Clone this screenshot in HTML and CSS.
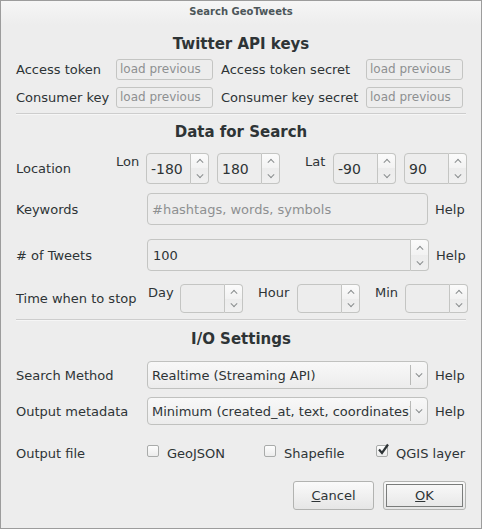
FILE: index.html
```html
<!DOCTYPE html>
<html>
<head>
<meta charset="utf-8">
<link rel="stylesheet" href="styles.css">
</head>
<body>
<div class="window">
  <div class="titlebar">Search GeoTweets</div>
  <div class="content">
    <h2 class="heading h-first">Twitter API keys</h2>
    <div class="keys">
      <span class="klabel">Access token</span>
      <span class="kfield">load previous</span>
      <span class="klabel2">Access token secret</span>
      <span class="kfield">load previous</span>
      <span class="klabel">Consumer key</span>
      <span class="kfield">load previous</span>
      <span class="klabel2">Consumer key secret</span>
      <span class="kfield">load previous</span>
    </div>
    <div class="sep"></div>
    <h2 class="heading h-second">Data for Search</h2>

    <div class="row row-loc">
      <span class="rlabel w100">Location</span>
      <span class="sublabel w30">Lon</span>
      <div class="spin sp-small"><span class="sfield">-180</span><span class="sbtns"><i class="up"></i><i class="dn"></i></span></div>
      <div class="spin sp-small ml8"><span class="sfield">180</span><span class="sbtns"><i class="up"></i><i class="dn"></i></span></div>
      <span class="sublabel lat">Lat</span>
      <div class="spin sp-small"><span class="sfield">-90</span><span class="sbtns"><i class="up"></i><i class="dn"></i></span></div>
      <div class="spin sp-small ml8"><span class="sfield">90</span><span class="sbtns"><i class="up"></i><i class="dn"></i></span></div>
    </div>

    <div class="row row-kw">
      <span class="rlabel w131">Keywords</span>
      <span class="lineedit placeholder">#hashtags, words, symbols</span>
      <span class="help">Help</span>
    </div>

    <div class="row row-tw">
      <span class="rlabel w131">#&nbsp;of Tweets</span>
      <div class="spin sp-wide"><span class="sfield">100</span><span class="sbtns"><i class="up"></i><i class="dn"></i></span></div>
      <span class="help">Help</span>
    </div>

    <div class="row row-time">
      <span class="rlabel w132">Time when to stop</span>
      <span class="sublabel w32">Day</span>
      <div class="spin sp-time"><span class="sfield"></span><span class="sbtns"><i class="up"></i><i class="dn"></i></span></div>
      <span class="sublabel hour">Hour</span>
      <div class="spin sp-time"><span class="sfield"></span><span class="sbtns"><i class="up"></i><i class="dn"></i></span></div>
      <span class="sublabel min">Min</span>
      <div class="spin sp-time"><span class="sfield"></span><span class="sbtns"><i class="up"></i><i class="dn"></i></span></div>
    </div>

    <div class="sep sep2"></div>
    <h2 class="heading h-third">I/O Settings</h2>

    <div class="row row-sm">
      <span class="rlabel w131">Search Method</span>
      <div class="combo"><span class="ctext">Realtime (Streaming API)</span><span class="cbtn"><i class="dn"></i></span></div>
      <span class="help">Help</span>
    </div>
    <div class="row row-om">
      <span class="rlabel w131">Output metadata</span>
      <div class="combo"><span class="ctext">Minimum (created_at, text, coordinates)</span><span class="cbtn"><i class="dn"></i></span></div>
      <span class="help">Help</span>
    </div>

    <div class="row row-of">
      <span class="rlabel w131">Output file</span>
      <label class="check w117"><span class="box"></span>GeoJSON</label>
      <label class="check w112"><span class="box"></span>Shapefile</label>
      <label class="check"><span class="box checked"><svg width="14" height="14" viewBox="0 0 14 14"><path d="M3 6.5 L6 10 L12 1.5" fill="none" stroke="#2e3436" stroke-width="2.2"/></svg></span>QGIS layer</label>
    </div>

    <div class="buttons">
      <button class="btn"><u>C</u>ancel</button>
      <button class="btn btn-ok"><u>O</u>K</button>
    </div>
  </div>
</div>
</body>
</html>
```
FILE: styles.css
```css
html, body {
  margin: 0;
  padding: 0;
  background: #ededed;
}
body {
  font-family: "DejaVu Sans", "Open Sans", sans-serif;
  font-size: 13px;
  color: #2e3436;
}
.window {
  box-sizing: border-box;
  width: 482px;
  height: 529px;
  border: 1px solid #9c9c9c;
  background: #ededed;
  overflow: hidden;
}
.titlebar {
  height: 24px;
  line-height: 22px;
  text-align: center;
  font-size: 10px;
  font-weight: 700;
  color: #4c5659;
  background: linear-gradient(#f6f6f6, #ededed);
}
.content {
  padding: 0 15px 0 15px;
}
.heading {
  margin: 0;
  text-align: center;
  font-size: 15px;
  font-weight: 700;
  color: #2e3436;
  line-height: 22px;
}
.h-first { margin-top: 8px; }
.keys {
  display: grid;
  grid-template-columns: 100px 105px 145px 97px;
  grid-auto-rows: 21px;
  row-gap: 7px;
  margin-top: 4px;
  align-items: center;
}
.kfield {
  box-sizing: border-box;
  width: 97px;
  height: 21px;
  border: 1px solid #c4c5c3;
  border-radius: 3px;
  color: #8d9091;
  font-size: 12px;
  line-height: 19px;
  padding-left: 3px;
  white-space: nowrap;
  overflow: hidden;
}
.klabel, .klabel2 { white-space: nowrap; }
.sep {
  height: 1px;
  background: #cdcdcd;
  margin-top: 5px;
  border-bottom: 1px solid #f6f6f6;
}
.h-second { margin-top: 6px; }
.row {
  display: flex;
  align-items: center;
  white-space: nowrap;
}
.rlabel { flex: none; }
.w100 { width: 100px; }
.w30 { width: 30px; }
.w131 { width: 131px; }
.w132 { width: 132px; }
.w32 { width: 32px; }
.ml8 { margin-left: 8px; }
.sublabel { flex: none; align-self: flex-start; margin-top: 1px; }
.lat { margin-left: 25px; width: 28px; }
.hour { margin-left: 15px; width: 39px; }
.min { margin-left: 15px; width: 30px; }

.row-loc { margin-top: 10px; height: 31px; }
.row-kw { margin-top: 9px; height: 32px; }
.row-tw { margin-top: 14px; height: 32px; }
.row-time { margin-top: 13px; height: 29px; }

.spin {
  display: flex;
  flex: none;
  height: 100%;
}
.sp-small { width: 63px; }
.sp-wide { width: 282px; }
.sp-time { width: 63px; }
.sfield {
  box-sizing: border-box;
  flex: 1;
  border: 1px solid #c4c5c3;
  border-radius: 4px 0 0 4px;
  padding-left: 4px;
  display: flex;
  align-items: center;
  font-size: 14px;
  color: #2e3436;
  overflow: hidden;
}
.sp-wide .sfield { font-size: 13px; padding-left: 5px; }
.sbtns {
  box-sizing: border-box;
  width: 18px;
  flex: none;
  border: 1px solid #c4c5c3;
  border-left: none;
  border-radius: 0 4px 4px 0;
  display: flex;
  flex-direction: column;
  background: linear-gradient(#fbfbfb, #f2f2f2 50%, #ececec 50%, #f0f0f0);
}
.sbtns i {
  flex: 1;
  position: relative;
}
.up::before, .dn::before {
  content: "";
  position: absolute;
  left: 50%;
  top: 50%;
  width: 4px;
  height: 4px;
  border-left: 1.5px solid #8a8e8f;
  border-top: 1.5px solid #8a8e8f;
}
.up::before { transform: translate(-50%, -25%) rotate(45deg); }
.dn::before { transform: translate(-50%, -75%) rotate(225deg); }

.lineedit {
  box-sizing: border-box;
  width: 281px;
  height: 100%;
  flex: none;
  border: 1px solid #c4c5c3;
  border-radius: 4px;
  padding-left: 4px;
  display: flex;
  align-items: center;
}
.placeholder { color: #8d9091; }
.help { margin-left: 7px; }

.sep2 { margin-top: 6px; }
.h-third { margin-top: 7px; }

.row-sm { margin-top: 11px; height: 28px; }
.row-om { margin-top: 8px; height: 28px; }
.combo {
  box-sizing: border-box;
  width: 281px;
  height: 100%;
  flex: none;
  display: flex;
  border: 1px solid #c0c1bf;
  border-radius: 4px;
  background: linear-gradient(#f8f8f8, #ececec);
  overflow: hidden;
}
.ctext {
  flex: 1;
  overflow: hidden;
  padding-left: 4px;
  display: flex;
  align-items: center;
}
.cbtn {
  width: 16px;
  flex: none;
  border-left: 1px solid #b8b9b7;
  margin: 3px 0;
  position: relative;
  display: flex;
}
.cbtn i { flex: 1; position: relative; }

.row-of { margin-top: 19px; height: 18px; }
.check {
  display: flex;
  align-items: center;
  flex: none;
}
.w117 { width: 117px; }
.w112 { width: 112px; }
.box {
  box-sizing: border-box;
  width: 12px;
  height: 12px;
  border: 1px solid #a9abaa;
  border-radius: 2px;
  background: linear-gradient(#fdfdfd, #ececec);
  margin-right: 8px;
  margin-top: -5px;
  position: relative;
}
.box svg { position: absolute; left: -1px; top: -3px; }

.buttons {
  display: flex;
  justify-content: flex-end;
  gap: 9px;
  margin-top: 19px;
  padding-right: 0;
}
.btn {
  box-sizing: border-box;
  height: 29px;
  width: 81px;
  font-family: inherit;
  font-size: 13px;
  color: #2e3436;
  border: 1px solid #b2b3b1;
  border-radius: 3px;
  background: linear-gradient(#fafafa, #e6e6e6);
  padding: 0;
}
.btn-ok {
  width: 83px;
  outline: 1px solid #7a7c7b;
  outline-offset: -4px;
}
```
